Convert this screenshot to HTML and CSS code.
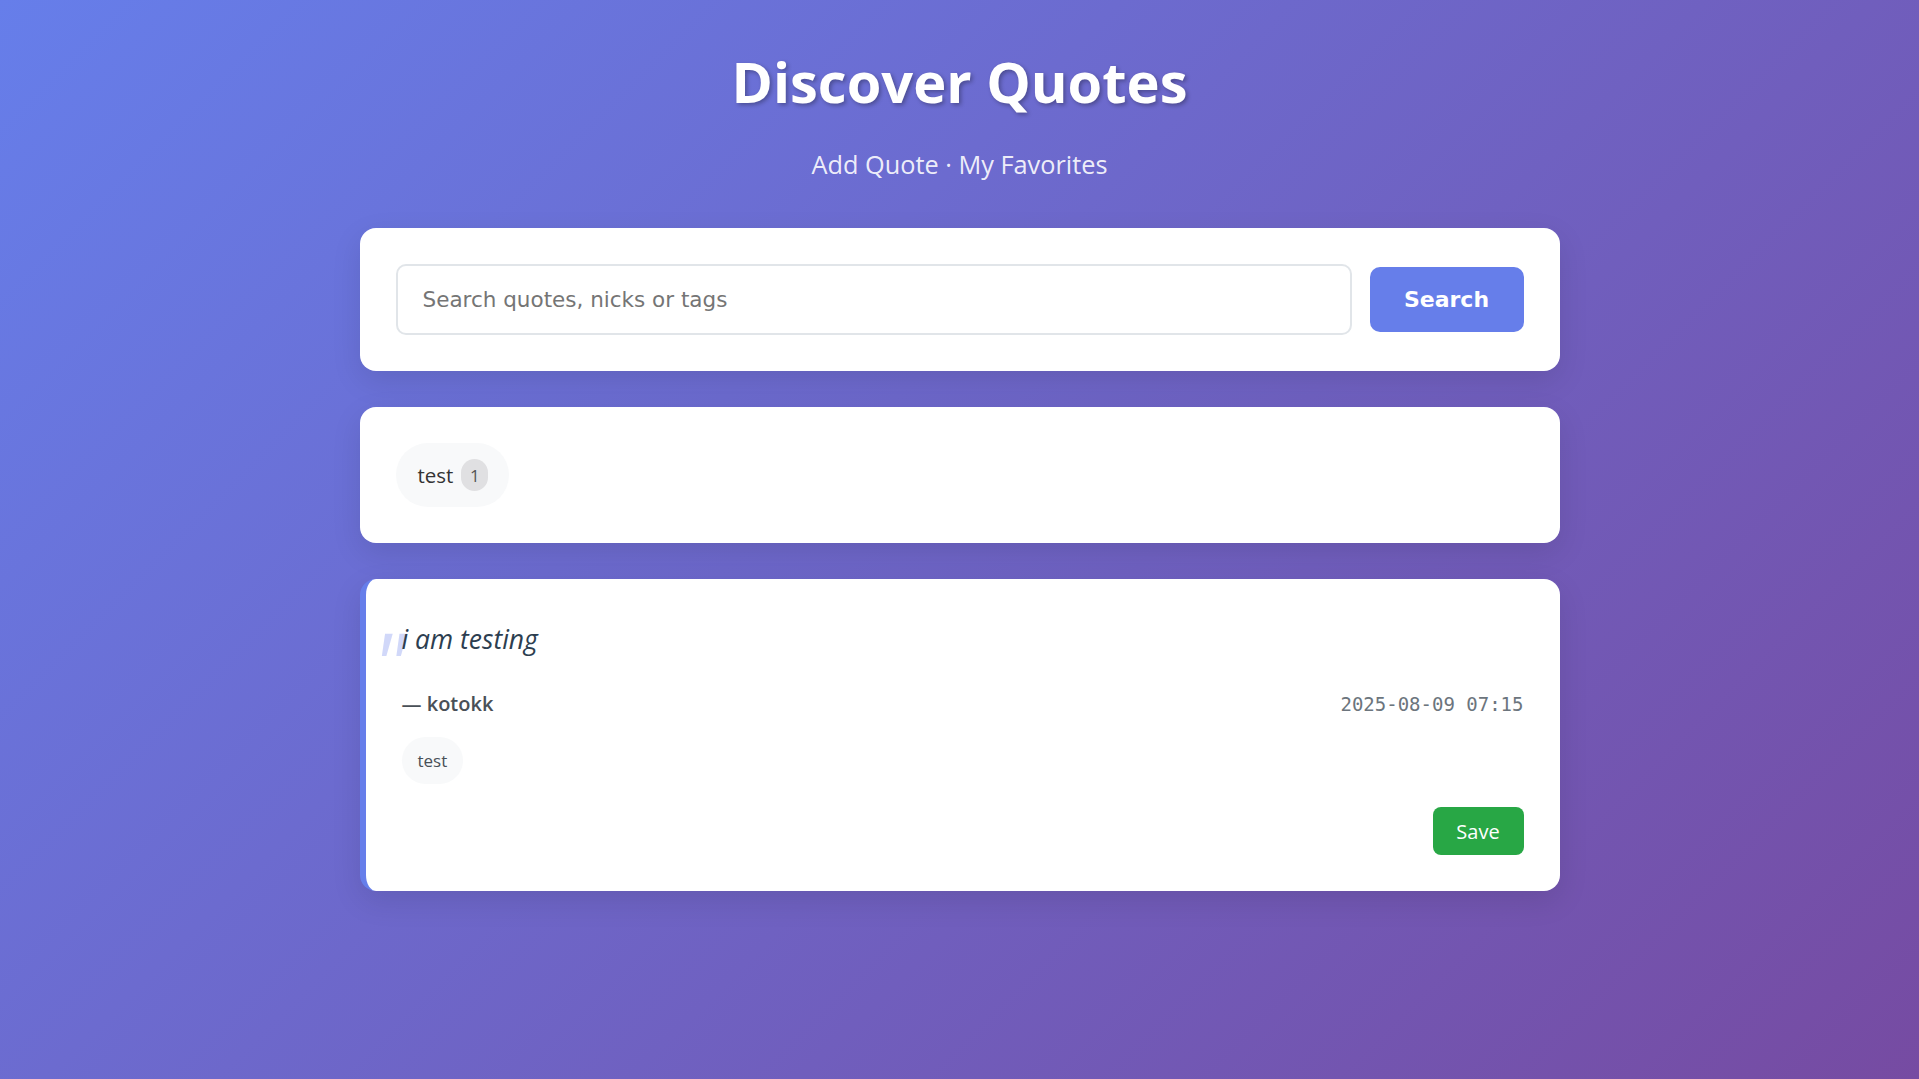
FILE: index.html
```html
<!DOCTYPE html>
<html lang="en">
<head>
<meta charset="utf-8">
<title>Discover Quotes</title>
<link rel="stylesheet" href="styles.css">
</head>
<body>
<div class="container">
  <header class="header">
    <h1 class="title">Discover Quotes</h1>
    <nav class="nav"><a href="#" class="nav-link">Add Quote</a> · <a href="#" class="nav-link">My Favorites</a></nav>
  </header>

  <section class="card search-card">
    <form class="search-form">
      <input class="search-input" type="text" placeholder="Search quotes, nicks or tags">
      <button class="btn btn-primary" type="button">Search</button>
    </form>
  </section>

  <section class="card tags-card">
    <a href="#" class="tag-pill">test <span class="tag-count">1</span></a>
  </section>

  <article class="card quote-card">
    <p class="quote-text">i am testing</p>
    <div class="quote-meta">
      <span class="quote-author">— kotokk</span>
      <span class="quote-date">2025-08-09 07:15</span>
    </div>
    <div class="quote-tags">
      <span class="quote-tag">test</span>
    </div>
    <div class="quote-actions">
      <button class="btn btn-save" type="button">Save</button>
    </div>
  </article>
</div>
</body>
</html>
```

FILE: styles.css
```css
* { box-sizing: border-box; }

html, body {
  margin: 0;
  padding: 0;
}

body {
  min-height: 100vh;
  background: linear-gradient(135deg, #667eea 0%, #764ba2 100%);
  font-family: "Open Sans", "Noto Sans", sans-serif;
  color: #333;
}

.container {
  max-width: 1200px;
  margin: 0 auto;
  padding: 36px 0;
}

.header {
  text-align: center;
  color: #fff;
  margin-bottom: 48px;
}

.title {
  margin: 0;
  font-size: 56px;
  line-height: 90px;
  font-weight: 700;
  text-shadow: 2px 2px 4px rgba(0, 0, 0, 0.3);
}

.nav {
  margin-top: 22px;
  font-size: 25.3px;
  line-height: 32px;
  color: rgba(255, 255, 255, 0.9);
}

.nav-link {
  color: rgba(255, 255, 255, 0.9);
  text-decoration: none;
}

.card {
  background: #fff;
  border-radius: 16px;
  padding: 36px;
  margin-bottom: 36px;
  box-shadow: 0 10px 30px rgba(0, 0, 0, 0.1);
}

.search-form {
  display: flex;
  align-items: center;
  gap: 18px;
}

.search-input {
  flex: 1;
  height: 71px;
  padding: 0 25px;
  border: 2px solid #e1e5e9;
  border-radius: 10px;
  font-family: "DejaVu Sans", sans-serif;
  font-size: 21.5px;
  color: #333;
  outline: none;
}

.search-input::placeholder {
  color: #757575;
}

.btn {
  border: none;
  cursor: pointer;
  color: #fff;
}

.btn-primary {
  height: 65px;
  width: 154px;
  border-radius: 10px;
  background: #667eea;
  font-family: "DejaVu Sans", sans-serif;
  font-weight: 700;
  font-size: 22px;
}

.tags-card {
  display: flex;
  flex-wrap: wrap;
  gap: 12px;
}

.tag-pill {
  display: inline-flex;
  align-items: center;
  gap: 8px;
  height: 64px;
  padding: 0 21px 0 22px;
  border-radius: 32px;
  background: #f8f9fa;
  color: #333;
  text-decoration: none;
  font-size: 20.5px;
}

.tag-count {
  display: inline-flex;
  align-items: center;
  justify-content: center;
  width: 27px;
  height: 32px;
  border-radius: 14px;
  background: #e0e0e2;
  color: #555;
  font-size: 17px;
}

.quote-card {
  position: relative;
  border-left: 6px solid #667eea;
}

.quote-card::before {
  content: "\"";
  position: absolute;
  left: 7px;
  top: 40px;
  font-size: 86px;
  line-height: 1;
  font-style: italic;
  font-family: "Open Sans", sans-serif;
  color: rgba(102, 126, 234, 0.3);
}

.quote-text {
  position: relative;
  margin: 0 0 27px;
  font-size: 26.5px;
  line-height: 48px;
  font-style: italic;
  color: #2c3e50;
}

.quote-meta {
  display: flex;
  justify-content: space-between;
  align-items: center;
  margin-bottom: 20px;
}

.quote-author {
  font-size: 20px;
  font-weight: 600;
  color: #495057;
}

.quote-date {
  font-family: "DejaVu Sans Mono", "Liberation Mono", monospace;
  font-size: 19px;
  color: #6c757d;
}

.quote-tags {
  display: flex;
  gap: 8px;
}

.quote-tag {
  display: inline-flex;
  align-items: center;
  height: 47px;
  padding: 0 16px;
  border-radius: 24px;
  background: #f8f9fa;
  color: #495057;
  font-size: 17px;
}

.quote-actions {
  display: flex;
  justify-content: flex-end;
  margin-top: 23px;
}

.btn-save {
  height: 48px;
  width: 91px;
  border-radius: 8px;
  background: #28a745;
  font-family: "Open Sans", sans-serif;
  font-size: 20px;
}
```
